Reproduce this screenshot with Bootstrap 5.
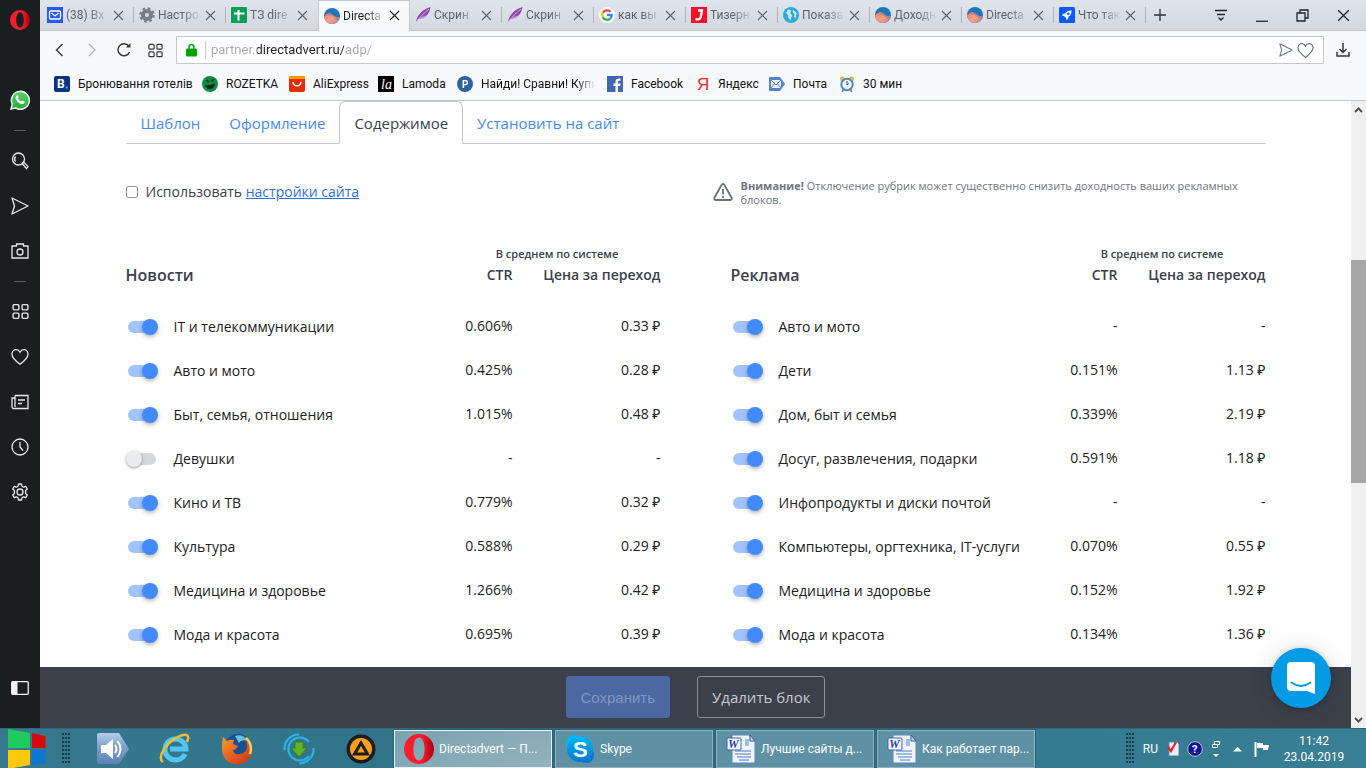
<!DOCTYPE html>
<html lang="ru">
<head>
<meta charset="utf-8">
<meta name="viewport" content="width=device-width, initial-scale=1">
<title>Directadvert — Партнёрам</title>
<link rel="stylesheet" href="https://cdn.jsdelivr.net/npm/bootstrap@5.3.0/dist/css/bootstrap.min.css">
<style>
  :root { --ui: "Open Sans", "Noto Sans", sans-serif; --chrome: Roboto, "Noto Sans", sans-serif; --blue: #448aff; }
  body { font-family: var(--ui); font-size: 14px; color: #212121; }
  button { font-family: inherit; }
  svg { display: block; flex: none; }
  .plain { border: 0; background: none; padding: 0; color: inherit; }

  .side { width: 40px; background: #1b1e1f; color: #e8eaea; }
  .side .plain { height: 45px; width: 40px; }
  .side .logo-btn { height: 40px; margin-bottom: 37px; }
  .side .rule { height: 16px; }
  .side .rule::before { content: ""; width: 12px; height: 1px; background: #5d6061; }
  .side .last-btn { margin-top: auto; margin-bottom: 18px; }
  .line-ico { fill: none; stroke: currentColor; }

  .tabstrip { height: 31px; background: linear-gradient(#dfe5ed, #d2d8de); border-bottom: 1px solid #c3c6ca; padding-left: 2px; font: 12px/16px var(--chrome); color: #5f6368; }
  .btab { width: 92px; height: 31px; padding: 0 9px 0 5px; position: relative; }
  .btab::after { content: ""; width: 1px; height: 16px; background: #aeb3b9; margin-left: 9px; margin-right: -10px; }
  .btab.on { background: #f8f9fb; border: 1px solid #c3c6ca; border-bottom: 0; color: #1f2225; }
  .btab.on::after, .btab.noline::after { background: transparent; }
  .btab .cap { width: 43px; text-align: left; white-space: nowrap; overflow: hidden; margin-left: 3px; margin-right: 4px; mask-image: linear-gradient(90deg, #000 55%, transparent); -webkit-mask-image: linear-gradient(90deg, #000 55%, transparent); }

  .navrow { height: 38px; background: #f8f9fb; padding: 5px 14px 5px 12px; color: #33373b; }
  .navrow .plain { width: 16px; }
  .address { height: 28px; border: 1px solid #c5c8cc; background: #fff; padding: 0 9px; margin: 0 8px 0 12px; }
  .address .bar { width: 1px; height: 18px; background: #c5c8cc; margin: 0 5px 0 8px; }
  .address input { border: 0; outline: 0; padding: 0; font: 13px/20px var(--chrome); color: #999; min-width: 0; -webkit-background-clip: text; background-clip: text; -webkit-text-fill-color: transparent; background-image: linear-gradient(90deg, #a6a8ab 46px, #1d1f22 46px, #1d1f22 133px, #a6a8ab 133px); }
  .marks { height: 32px; background: #f8f9fb; border-bottom: 1px solid #c3c6ca; padding: 0 0 2px 14px; font: 12px/16px var(--chrome); grid-template-columns: 148px 87px 89px 79px 150px 91px 71px 70px 80px; }
  .marks a { color: #111; text-decoration: none; white-space: nowrap; overflow: hidden; }
  .marks .fade-end { mask-image: linear-gradient(90deg, #000 80%, transparent 92%); -webkit-mask-image: linear-gradient(90deg, #000 80%, transparent 92%); }

  .wrap { max-width: 1140px; }
  .nav-tabs { --bs-nav-tabs-border-color: #c4c6cc; }
  .nav-tabs .nav-link { font-size: 15px; line-height: 22px; padding: 10px 14px 9px; color: var(--blue); }
  .nav-tabs .nav-item { margin-right: -1px; }
  .nav-tabs .nav-link.active { color: #3b404b; border-color: #c4c6cc #c4c6cc #fff; }
  .notes { padding-top: 36px; height: 100px; column-gap: 52px; }
  .site-opt { width: 535px; flex: none; padding-top: 3px; line-height: 18px; color: #3b404b; }
  .site-opt a { color: #2f6fe4; }
  .site-opt input { width: 12px; height: 12px; margin: 0; border: 1px solid #8f929c; border-radius: 2px; background: #fff; appearance: none; flex: none; }
  .warn { font-size: 11px; line-height: 14px; color: #6f7480; margin-top: -1px; }

  .pair { column-gap: 70px; }
  .rubrics { width: 100%; table-layout: fixed; border-collapse: collapse; }
  .rubrics .c-ctr { width: 59px; }
  .rubrics .c-price { width: 148px; }
  .rubrics th { font-weight: 600; color: #3b404b; padding: 0; text-align: right; }
  .rubrics .avg { font-size: 11px; line-height: 20px; text-align: center; }
  .rubrics .heads th { font-size: 14px; line-height: 22px; padding-bottom: 18px; }
  .rubrics .heads th:first-child { font-size: 16px; text-align: left; }
  .rubrics td { height: 44px; padding: 0; text-align: right; white-space: nowrap; line-height: 20px; }
  .rubrics td label { display: flex; align-items: center; gap: 16px; padding-top: 1px; }
  .rub { font-size: 14px; }
  .toggle { appearance: none; margin: 0; width: 32px; height: 16px; position: relative; flex: none; }
  .toggle::before { content: ""; position: absolute; inset: 2px; border-radius: 6px; background: #d6d8da; }
  .toggle::after { content: ""; position: absolute; left: 0; top: 0; width: 16px; height: 16px; border-radius: 50%; background: #ebecee; box-shadow: 0 1px 3px rgba(0,0,0,.4); }
  .toggle:checked::before { background: #a1c4ff; }
  .toggle:checked::after { left: 16px; background: var(--blue); box-shadow: 0 2px 4px rgba(0,0,0,.3); }

  .actions { height: 61px; background: #3b404b; gap: 27px; padding-bottom: 2px; }
  .actions .btn { height: 42px; border-radius: 3px; font-size: 15px; line-height: 20px; padding: 0 14px; }
  .actions .save { font-family: "Liberation Sans", Arial, sans-serif; padding-top: 2px; }
  .save:disabled { background: #4a69a3; border-color: #4a69a3; color: #8297c0; opacity: 1; }
  .drop { border: 1px solid #8b8e96; color: #c6c9ce; }
  .chat { position: absolute; right: 20px; bottom: 20px; width: 60px; height: 60px; border-radius: 50%; background: #039be5; border: 0; box-shadow: 0 1px 6px rgba(0,0,0,.2), 0 2px 24px rgba(0,0,0,.14); }

  .scroller { width: 15px; background: #f0f0f0; color: #505356; }
  .scroller .arrow { height: 17px; }
  .scroller .thumb { flex: 223; background: #a7a7a7; }

  .taskbar { height: 40px; background: linear-gradient(100deg, #36798f, #2f7187 40%, #387f96); color: #fff; font: 12px/16px var(--chrome); border-top: 1px solid #2d667a; }
  .dots { width: 9px; height: 31px; background: radial-gradient(circle at 1px 1px, #143c49 1px, transparent 1px) 0 0 / 3px 4px; }
  .quick { gap: 30px; padding-left: 22px; width: 319px; }
  .tasks { gap: 3px; }
  .task { width: 158px; height: 38px; background: #5d91a3; border: 1px solid #90b4c1; outline: 1px solid #2b6075; padding-left: 8px; gap: 4px; white-space: nowrap; }
  .task.on { background: linear-gradient(160deg, #79a3b0, #93b2bd); border-color: #e8f0f3; }
  .clock { width: 72px; }
</style>
</head>
<body class="vh-100 overflow-hidden d-flex flex-column">
<svg width="0" height="0" class="position-absolute" aria-hidden="true">
  <defs>
    <linearGradient id="gDa" x1="0" y1="0" x2="1" y2="1"><stop offset="0" stop-color="#f3766c"/><stop offset=".5" stop-color="#f5a184"/><stop offset="1" stop-color="#c77d8c"/></linearGradient>
    <linearGradient id="gOp" x1="0" y1="0" x2="1" y2="0"><stop offset="0" stop-color="#ff1b2d"/><stop offset=".6" stop-color="#fa1e2e"/><stop offset="1" stop-color="#a70014"/></linearGradient>
    <linearGradient id="gTh" x1="0" y1="0" x2="0" y2="1"><stop offset="0" stop-color="#b5cdea"/><stop offset=".45" stop-color="#7f9fc9"/><stop offset="1" stop-color="#5d83b4"/></linearGradient>
    <linearGradient id="gFx" x1="0" y1="0" x2="1" y2="1"><stop offset="0" stop-color="#f3a32c"/><stop offset=".5" stop-color="#e5601f"/><stop offset="1" stop-color="#c4321c"/></linearGradient>
    <linearGradient id="gSk" x1="0" y1="0" x2="0" y2="1"><stop offset="0" stop-color="#00b7f0"/><stop offset="1" stop-color="#0078d4"/></linearGradient>
    <linearGradient id="gWa" x1="0" y1="0" x2="0" y2="1"><stop offset="0" stop-color="#5fd36b"/><stop offset="1" stop-color="#25a83a"/></linearGradient>
    <symbol id="x" viewBox="0 0 11 11"><path d="M1 1l9 9M10 1l-9 9" fill="none" stroke="currentColor" stroke-width="1.1"/></symbol>
    <symbol id="da" viewBox="0 0 16 16"><circle cx="8" cy="8" r="8" fill="#1f77b8"/><path d="M0 8.500C2 6.500 4 5 5.500 5c2 0 3.500 2.500 5.500 3.500 1.500.8 3 .9 4.900.6A8 8 0 0 1 0 8.500z" fill="url(#gDa)"/><path d="M5.500 5c2 0 3.500 2.500 5.500 3.500 1.500.8 3 .9 4.900.6a8 8 0 0 1-1.400 3.700C11 12 10 9 8 8S5 7.500 3 7z" fill="#8e7399" opacity=".5"/></symbol>
    <symbol id="quill" viewBox="0 0 16 16"><path d="M1 15C2 8 8 2 15.500 0c-1 6-4 11-12 12z" fill="#8e44ad"/><path d="M1 15C5 10 9 6 14 2" fill="none" stroke="#d9bce6" stroke-width=".9"/><path d="M3.500 12c4 0 7-1 9-4l-6 2z" fill="#c79be0"/></symbol>
    <symbol id="heart" viewBox="0 0 18 18"><path d="M9 16.300C4 12.500 1 9.500 1 6.200 1 3.600 2.900 1.700 5.200 1.700c1.700 0 3 .9 3.800 2.500.8-1.600 2.100-2.500 3.800-2.500C15.100 1.700 17 3.600 17 6.200c0 3.300-3 6.300-8 10.100z" fill="none" stroke="currentColor" stroke-width="1.300"/></symbol>
    <symbol id="send" viewBox="0 0 18 18"><path d="M1 1l16 8-16 8 2.500-8z" fill="none" stroke="currentColor" stroke-width="1.300" stroke-linejoin="round"/></symbol>
    <symbol id="grid4" viewBox="0 0 16 16"><g fill="none" stroke="currentColor" stroke-width="1.300"><rect x="1" y="1.500" width="5.500" height="5" rx="1"/><rect x="9.500" y="1.500" width="5.500" height="5" rx="1"/><rect x="1" y="9.500" width="5.500" height="5" rx="1"/><rect x="9.500" y="9.500" width="5.500" height="5" rx="1"/></g></symbol>
    <symbol id="opera" viewBox="0 0 30 30"><path fill-rule="evenodd" fill="url(#gOp)" d="M15 0a15 15 0 1 0 0 30 15 15 0 0 0 0-30zm0 3.500c3.600 0 5.600 5 5.600 11.500S18.600 26.500 15 26.500 9.400 21.500 9.400 15 11.400 3.500 15 3.500z"/></symbol>
    <symbol id="word" viewBox="0 0 30 30"><path d="M6 1h18l5 6v22H6z" fill="#eef4fc" stroke="#5f83bd"/><path d="M24 1v6h5z" fill="#c3d6ee" stroke="#3a588c"/><rect x="19" y="5" width="4" height="7" fill="#9fc0e6"/><path d="M9 17h16M9 20h16M11 23h14M13 26h10" stroke="#86a5d2" stroke-width="1.300"/><rect x="1" y="4" width="14" height="12" rx="1" fill="#f5f8fe" stroke="#3e62ae"/><text x="2" y="14" font-family="Liberation Serif, serif" font-weight="700" font-style="italic" font-size="12" fill="#2646a0">W</text></symbol>
  </defs>
</svg>

<div class="d-flex flex-grow-1 overflow-hidden">
  <nav class="side d-flex flex-column align-items-center flex-shrink-0" aria-label="Opera">
    <button class="plain logo-btn d-flex align-items-center justify-content-center" aria-label="Меню Opera"><svg width="20" height="20"><use href="#opera"/></svg></button>
    <button class="plain d-flex align-items-center justify-content-center" aria-label="WhatsApp"><svg width="20" height="20" viewBox="0 0 20 20"><path d="M1 19l1.300-4.700A9 9 0 1 1 5.700 18z" fill="url(#gWa)" stroke="#e9f3ea" stroke-width="1.500"/><path d="M7 5.200c.5-.2 1 0 1.200.6l.5 1.300c.1.400-.8 1.200-.7 1.500.8 1.500 1.900 2.400 3.300 3 .4.100 1-1.100 1.400-1l1.800.9c.4.300.1 1.500-.5 2-1.500 1-3.300.5-5-.6C7.300 11.800 5.700 9.600 5.600 8c0-1.200.6-2.400 1.400-2.800z" fill="#fff"/></svg></button>
    <div class="rule d-flex align-items-center"></div>
    <button class="plain d-flex align-items-center justify-content-center" aria-label="Поиск"><svg class="line-ico" width="18" height="18" viewBox="0 0 18 18" stroke-width="1.300"><circle cx="7.500" cy="7" r="6"/><path d="M4.500 9.500a4 4 0 0 1 0-5M11 11.500l1.500-1.500 4.500 4.500-1.500 2.200z"/></svg></button>
    <button class="plain d-flex align-items-center justify-content-center" aria-label="Моя лента"><svg width="18" height="18"><use href="#send"/></svg></button>
    <button class="plain d-flex align-items-center justify-content-center" aria-label="Снимок"><svg class="line-ico" width="18" height="18" viewBox="0 0 18 18" stroke-width="1.300"><path d="M1 4h4.500V2h7v2H17v12H1z" stroke-linejoin="round"/><circle cx="9" cy="10" r="3"/></svg></button>
    <div class="rule d-flex align-items-center"></div>
    <button class="plain d-flex align-items-center justify-content-center" aria-label="Экспресс-панель"><svg width="17" height="17"><use href="#grid4"/></svg></button>
    <button class="plain d-flex align-items-center justify-content-center" aria-label="Закладки"><svg width="18" height="18"><use href="#heart"/></svg></button>
    <button class="plain d-flex align-items-center justify-content-center" aria-label="Новости"><svg class="line-ico" width="18" height="18" viewBox="0 0 18 18" stroke-width="1.300"><path d="M4 2.500h13v13H2.500A1.500 1.500 0 0 1 1 14V5h3M4 2.500V14M7 7h7M7 10.500h4"/></svg></button>
    <button class="plain d-flex align-items-center justify-content-center" aria-label="История"><svg class="line-ico" width="18" height="18" viewBox="0 0 18 18" stroke-width="1.300"><circle cx="9" cy="9" r="8"/><path d="M9 4v5l3 3.500"/></svg></button>
    <button class="plain d-flex align-items-center justify-content-center" aria-label="Настройки"><svg class="line-ico" width="18" height="18" viewBox="0 0 18 18" stroke-width="1.300" stroke-linejoin="round"><path d="M7.500 1h3l.5 2.300 1.600.9 2.200-.8 1.500 2.600-1.700 1.500v3l1.700 1.500-1.500 2.600-2.200-.8-1.600.9-.5 2.300h-3L7 14.700l-1.600-.9-2.200.8L1.700 12l1.700-1.500v-3L1.700 6l1.500-2.600 2.200.8L7 3.300z"/><circle cx="9" cy="9" r="3"/></svg></button>
    <button class="plain last-btn d-flex align-items-center justify-content-center" aria-label="Боковая панель"><svg width="18" height="14" viewBox="0 0 18 14"><rect x=".7" y=".7" width="16.600" height="12.600" rx="1" fill="none" stroke="#f2f2f2" stroke-width="1.300"/><path d="M1 1h5.500v12H1z" fill="#f2f2f2"/></svg></button>
  </nav>

  <div class="d-flex flex-column flex-grow-1 overflow-hidden">
    <header class="flex-shrink-0">
      <div class="tabstrip d-flex align-items-center">
        <button class="btab plain d-flex align-items-center"><svg width="16" height="16"><rect width="16" height="16" fill="#2a57f0"/><rect x="2.500" y="4" width="11" height="8" rx="1" fill="none" stroke="#fff" stroke-width="1.300"/><path d="M4.500 6L8 9l3.500-3" fill="none" stroke="#fff" stroke-width="1.300"/></svg><span class="cap">(38) Вх</span><svg width="11" height="11"><use href="#x"/></svg></button>
        <button class="btab plain d-flex align-items-center"><svg width="16" height="16" viewBox="0 0 16 16"><circle cx="8" cy="8" r="4" fill="none" stroke="#7b7f83" stroke-width="4"/><circle cx="8" cy="8" r="6.500" fill="none" stroke="#7b7f83" stroke-width="2.500" stroke-dasharray="2.600 2.500"/></svg><span class="cap">Настро</span><svg width="11" height="11"><use href="#x"/></svg></button>
        <button class="btab plain noline d-flex align-items-center"><svg width="16" height="16"><rect width="16" height="16" rx="1" fill="#109d58"/><path d="M3 6.500h10.500M7.500 3v10.500" stroke="#fff" stroke-width="2"/></svg><span class="cap">ТЗ dire</span><svg width="11" height="11"><use href="#x"/></svg></button>
        <button class="btab plain on d-flex align-items-center"><svg width="16" height="16"><use href="#da"/></svg><span class="cap">Directa</span><svg width="11" height="11"><use href="#x"/></svg></button>
        <button class="btab plain d-flex align-items-center"><svg width="16" height="16"><use href="#quill"/></svg><span class="cap">Скрин</span><svg width="11" height="11"><use href="#x"/></svg></button>
        <button class="btab plain d-flex align-items-center"><svg width="16" height="16"><use href="#quill"/></svg><span class="cap">Скрин</span><svg width="11" height="11"><use href="#x"/></svg></button>
        <button class="btab plain d-flex align-items-center"><svg width="16" height="16" viewBox="0 0 16 16"><circle cx="8" cy="8" r="8" fill="#fff"/><g fill="none" stroke-width="2.300"><path d="M11.500 4.800A4.800 4.800 0 0 0 3.800 5.800" stroke="#ea4335"/><path d="M3.800 5.800a4.800 4.800 0 0 0 0 4.500" stroke="#fbbc05"/><path d="M3.800 10.300a4.800 4.800 0 0 0 7.400 1.300" stroke="#34a853"/><path d="M11.200 11.600c1-.9 1.600-2.200 1.500-3.600H8" stroke="#4285f4"/></g></svg><span class="cap">как вы</span><svg width="11" height="11"><use href="#x"/></svg></button>
        <button class="btab plain d-flex align-items-center"><svg width="16" height="16"><rect width="16" height="16" fill="#fb0d29"/><path d="M7 3.500h4L9.800 10c-.4 2-2.300 2.800-5.300 2.200" fill="none" stroke="#fff" stroke-width="2.300"/></svg><span class="cap">Тизерн</span><svg width="11" height="11"><use href="#x"/></svg></button>
        <button class="btab plain d-flex align-items-center"><svg width="16" height="16"><circle cx="8" cy="8" r="8" fill="#31a8d8"/><path d="M5 2.500l3 .8-.6 3L9 8l-1.500 5.500L5.500 11 5 8 3 6zM10.500 3l3 3-.5 5-2-1 .5-3-2-2z" fill="#c8edf7"/></svg><span class="cap">Показа</span><svg width="11" height="11"><use href="#x"/></svg></button>
        <button class="btab plain d-flex align-items-center"><svg width="16" height="16"><use href="#da"/></svg><span class="cap">Доходн</span><svg width="11" height="11"><use href="#x"/></svg></button>
        <button class="btab plain d-flex align-items-center"><svg width="16" height="16"><use href="#da"/></svg><span class="cap">Directa</span><svg width="11" height="11"><use href="#x"/></svg></button>
        <button class="btab plain d-flex align-items-center"><svg width="16" height="16"><rect width="16" height="16" rx="1.500" fill="#0a5bff"/><path d="M12.500 3.500c-3-.2-5 .9-6.300 3l-2 .3L3 8.800l2 .2 2 2 .2 2 2-1.200.3-2c2.100-1.300 3.200-3.300 3-6.300z" fill="#fff"/><circle cx="9.300" cy="6.700" r="1.300" fill="#0a5bff"/></svg><span class="cap">Что так</span><svg width="11" height="11"><use href="#x"/></svg></button>
        <button class="plain ms-2" aria-label="Новая вкладка"><svg width="12" height="12"><path d="M6 0v12M0 6h12" stroke="#33373b" stroke-width="1.300"/></svg></button>
        <div class="ms-auto d-flex align-items-center text-dark pe-3">
          <button class="plain me-4" aria-label="Меню вкладок"><svg class="line-ico" width="14" height="16" stroke-width="1.300"><path d="M1 3.500h12M3 7.500h8M4.500 10.500L7 13l2.500-2.500"/></svg></button>
          <button class="plain ms-1 me-4" aria-label="Свернуть"><svg width="12" height="13"><path d="M0 12.300h12" stroke="#33373b" stroke-width="1.400"/></svg></button>
          <button class="plain ms-1 me-4" aria-label="Окно"><svg class="line-ico" width="13" height="13" stroke-width="1.300"><path d="M1 4h8v8H1zM4 4V1h8v8H9"/></svg></button>
          <button class="plain ms-1" aria-label="Закрыть"><svg width="13" height="13"><use href="#x"/></svg></button>
        </div>
      </div>
      <div class="navrow d-flex align-items-center">
        <button class="plain me-3" aria-label="Назад"><svg class="line-ico" width="16" height="16" stroke-width="1.400"><path d="M10.500 2L4.500 8l6 6"/></svg></button>
        <button class="plain me-3 text-black-50" aria-label="Вперёд"><svg class="line-ico" width="16" height="16" stroke-width="1.200" opacity=".6"><path d="M5 2l6 6-6 6"/></svg></button>
        <button class="plain me-3" aria-label="Обновить"><svg class="line-ico" width="16" height="16" stroke-width="1.500"><path d="M13.500 10A6 6 0 1 1 13 4.500"/><path d="M14.500 1v4.500H10z" fill="currentColor" stroke="none"/></svg></button>
        <button class="plain" aria-label="Экспресс-панель"><svg width="15" height="15"><use href="#grid4"/></svg></button>
        <div class="address d-flex align-items-center flex-grow-1">
          <svg width="11" height="14"><path d="M3 6V4a2.500 2.500 0 0 1 5 0v2" fill="none" stroke="#0aa30a" stroke-width="1.500"/><rect y="5.500" width="11" height="8" rx="1" fill="#0aa30a"/></svg>
          <span class="bar"></span>
          <input class="flex-grow-1" type="text" aria-label="Адрес" value="partner.directadvert.ru/adp/">
          <svg class="me-1 text-secondary" width="14" height="14"><use href="#send"/></svg>
          <svg class="text-secondary" width="17" height="17"><use href="#heart"/></svg>
        </div>
        <button class="plain ms-1" aria-label="Загрузки"><svg class="line-ico" width="14" height="16" stroke-width="1.500"><path d="M1 10v4h12v-4M7 1v9M3.500 7L7 10.500 10.500 7"/></svg></button>
      </div>
      <nav class="marks d-grid align-items-center" aria-label="Закладки">
        <a href="#" class="d-flex align-items-center gap-2"><svg width="16" height="16"><rect width="16" height="16" rx="2" fill="#053580"/><text x="3" y="12" font-size="12" font-weight="700" fill="#fff">B</text><circle cx="12.800" cy="11.500" r="1.200" fill="#22a6e8"/></svg>Бронювання готелів</a>
        <a href="#" class="d-flex align-items-center gap-2"><svg width="16" height="16"><circle cx="8" cy="8" r="8" fill="#118a43"/><path d="M3 9c3 .8 7 0 10-2-.3 4-2 6-4.800 6S3.800 11.500 3 9z" fill="#10271a"/><path d="M4 4l3 2M12 3L9.500 5.500" stroke="#0e3a20" stroke-width="1.500"/></svg>ROZETKA</a>
        <a href="#" class="d-flex align-items-center gap-2"><svg width="16" height="16"><rect width="16" height="16" rx="2" fill="#e62e04"/><path d="M0 3V2q0-2 2-2h12q2 0 2 2v1z" fill="#ff9a00"/><path d="M4 6c.5 5 7.500 5 8 0" fill="none" stroke="#fff" stroke-width="1.500"/></svg>AliExpress</a>
        <a href="#" class="d-flex align-items-center gap-2"><svg width="16" height="16"><rect width="16" height="16" fill="#000"/><text x="3" y="13" font-family="Liberation Serif, serif" font-style="italic" font-size="14" fill="#fff">la</text></svg>Lamoda</a>
        <a href="#" class="d-flex align-items-center gap-2 fade-end"><svg width="16" height="16"><circle cx="8" cy="8" r="8" fill="#2c629e"/><text x="5" y="12" font-size="10" font-weight="700" fill="#fff">P</text></svg>Найди! Сравни! Купи</a>
        <a href="#" class="d-flex align-items-center gap-2"><svg width="16" height="16"><rect width="16" height="16" fill="#4267b2"/><path d="M11 16v-6h2.200l.3-2.500H11V6c0-.8.300-1.200 1.300-1.200h1.300V2.500C11 2.200 8.500 2.500 8.500 5.500v2h-2V10h2v6z" fill="#fff"/></svg>Facebook</a>
        <a href="#" class="d-flex align-items-center gap-2"><svg width="12" height="16"><text x="-1" y="14" font-family="Liberation Sans, sans-serif" font-size="17" fill="#f4281c" font-weight="400">Я</text></svg>Яндекс</a>
        <a href="#" class="d-flex align-items-center gap-2"><svg width="16" height="16"><path d="M1 1h10l5 7-5 7H1q-1 0-1-1V2q0-1 1-1z" fill="#5684c8"/><rect x="2" y="4" width="10" height="8" fill="#e8effa"/><path d="M2 4l5 5 5-5M2 12l3.500-4M12 12L8.500 8" fill="none" stroke="#5684c8"/></svg>Почта</a>
        <a href="#" class="d-flex align-items-center gap-2"><svg width="16" height="16"><circle cx="3.500" cy="3" r="2.500" fill="#eab54a"/><circle cx="12.500" cy="3" r="2.500" fill="#eab54a"/><path d="M3 16l2-3M13 16l-2-3" stroke="#777" stroke-width="1.500"/><circle cx="8" cy="8.500" r="5.700" fill="#f6fafc" stroke="#4b8bc0" stroke-width="2"/><path d="M8 5v4l2-1.500" fill="none" stroke="#345"/></svg>30 мин</a>
      </nav>
    </header>

    <div class="d-flex flex-grow-1 overflow-hidden">
      <div class="d-flex flex-column flex-grow-1 position-relative overflow-hidden">
        <main class="flex-grow-1 overflow-hidden">
          <div class="wrap mx-auto">
            <ul class="nav nav-tabs">
              <li class="nav-item"><a class="nav-link" href="#">Шаблон</a></li>
              <li class="nav-item"><a class="nav-link" href="#">Оформление</a></li>
              <li class="nav-item"><a class="nav-link active" aria-current="page" href="#">Содержимое</a></li>
              <li class="nav-item"><a class="nav-link" href="#">Установить на сайт</a></li>
            </ul>
            <div class="notes d-flex align-items-start">
              <div class="site-opt d-flex align-items-center gap-2"><input type="checkbox" id="useSite"><label for="useSite">Использовать <a href="#">настройки сайта</a></label></div>
              <div class="warn d-flex gap-2 flex-grow-1"><svg class="mt-1" width="20" height="18" viewBox="0 0 20 18"><path d="M8.700 1.700q1.300-1.600 2.600 0l7.300 13q.7 2-1.300 2.300H2.700Q.7 16.700 1.400 14.700z" fill="none" stroke="#6b7080" stroke-width="1.800"/><path d="M10 6v5.500M10 13v2" stroke="#6b7080" stroke-width="1.800"/></svg><p class="m-0"><b>Внимание!</b> Отключение рубрик может существенно снизить доходность ваших рекламных блоков.</p></div>
            </div>
            <div class="pair d-flex">
              <table class="rubrics">
                <colgroup><col><col class="c-ctr"><col class="c-price"></colgroup>
                <thead>
                  <tr><td class="h-auto"></td><th class="avg" colspan="2">В среднем по системе</th></tr>
                  <tr class="heads"><th>Новости</th><th>CTR</th><th>Цена за переход</th></tr>
                </thead>
                <tbody>
                  <tr><td><label><input class="toggle" type="checkbox" checked>IT и телекоммуникации</label></td><td>0.606%</td><td>0.33 <span class="rub">₽</span></td></tr>
                  <tr><td><label><input class="toggle" type="checkbox" checked>Авто и мото</label></td><td>0.425%</td><td>0.28 <span class="rub">₽</span></td></tr>
                  <tr><td><label><input class="toggle" type="checkbox" checked>Быт, семья, отношения</label></td><td>1.015%</td><td>0.48 <span class="rub">₽</span></td></tr>
                  <tr><td><label><input class="toggle" type="checkbox">Девушки</label></td><td>-</td><td>-</td></tr>
                  <tr><td><label><input class="toggle" type="checkbox" checked>Кино и ТВ</label></td><td>0.779%</td><td>0.32 <span class="rub">₽</span></td></tr>
                  <tr><td><label><input class="toggle" type="checkbox" checked>Культура</label></td><td>0.588%</td><td>0.29 <span class="rub">₽</span></td></tr>
                  <tr><td><label><input class="toggle" type="checkbox" checked>Медицина и здоровье</label></td><td>1.266%</td><td>0.42 <span class="rub">₽</span></td></tr>
                  <tr><td><label><input class="toggle" type="checkbox" checked>Мода и красота</label></td><td>0.695%</td><td>0.39 <span class="rub">₽</span></td></tr>
                </tbody>
              </table>
              <table class="rubrics">
                <colgroup><col><col class="c-ctr"><col class="c-price"></colgroup>
                <thead>
                  <tr><td class="h-auto"></td><th class="avg" colspan="2">В среднем по системе</th></tr>
                  <tr class="heads"><th>Реклама</th><th>CTR</th><th>Цена за переход</th></tr>
                </thead>
                <tbody>
                  <tr><td><label><input class="toggle" type="checkbox" checked>Авто и мото</label></td><td>-</td><td>-</td></tr>
                  <tr><td><label><input class="toggle" type="checkbox" checked>Дети</label></td><td>0.151%</td><td>1.13 <span class="rub">₽</span></td></tr>
                  <tr><td><label><input class="toggle" type="checkbox" checked>Дом, быт и семья</label></td><td>0.339%</td><td>2.19 <span class="rub">₽</span></td></tr>
                  <tr><td><label><input class="toggle" type="checkbox" checked>Досуг, развлечения, подарки</label></td><td>0.591%</td><td>1.18 <span class="rub">₽</span></td></tr>
                  <tr><td><label><input class="toggle" type="checkbox" checked>Инфопродукты и диски почтой</label></td><td>-</td><td>-</td></tr>
                  <tr><td><label><input class="toggle" type="checkbox" checked>Компьютеры, оргтехника, IT-услуги</label></td><td>0.070%</td><td>0.55 <span class="rub">₽</span></td></tr>
                  <tr><td><label><input class="toggle" type="checkbox" checked>Медицина и здоровье</label></td><td>0.152%</td><td>1.92 <span class="rub">₽</span></td></tr>
                  <tr><td><label><input class="toggle" type="checkbox" checked>Мода и красота</label></td><td>0.134%</td><td>1.36 <span class="rub">₽</span></td></tr>
                </tbody>
              </table>
            </div>
          </div>
        </main>
        <div class="actions d-flex align-items-center justify-content-center flex-shrink-0">
          <button class="btn save" disabled>Сохранить</button>
          <button class="btn drop">Удалить блок</button>
        </div>
        <button class="chat d-flex align-items-center justify-content-center" aria-label="Чат"><svg width="28" height="32" viewBox="0 0 28 32"><path d="M4 0h20q4 0 4 4v28l-8-3H4q-4 0-4-4V4q0-4 4-4z" fill="#fff"/><path d="M4.500 20.500q9.500 7 19 0" fill="none" stroke="#039be5" stroke-width="1.800" stroke-linecap="round"/></svg></button>
      </div>
      <div class="scroller d-flex flex-column flex-shrink-0" aria-hidden="true">
        <div class="arrow d-flex align-items-center justify-content-center"><svg class="line-ico" width="9" height="6" stroke-width="2"><path d="M1 5l3.500-3.500L8 5"/></svg></div>
        <div style="flex:142"></div><div class="thumb"></div><div style="flex:228"></div>
        <div class="arrow d-flex align-items-center justify-content-center"><svg class="line-ico" width="9" height="6" stroke-width="2"><path d="M1 1l3.500 3.500L8 1"/></svg></div>
      </div>
    </div>
  </div>
</div>

<footer class="taskbar d-flex align-items-center flex-shrink-0">
  <button class="plain ms-2" aria-label="Пуск"><svg width="38" height="40" viewBox="0 0 38 40"><path d="M0 0l22 4v15H0z" fill="#1fca5e"/><path d="M24 4l13.500 3v12H24z" fill="#d40a0e"/><path d="M0 21h22v15L0 40z" fill="#ffc80a"/><path d="M24 21h13.500v13L24 36z" fill="#0a78d0"/></svg></button>
  <span class="dots ms-3 me-1"></span>
  <div class="quick d-flex align-items-center">
    <button class="plain" aria-label="Звук"><svg width="32" height="32"><path d="M2 0h20l10 16-10 15H2q-2 0-2-2V2q0-2 2-2z" fill="url(#gTh)"/><path d="M4 12h5l7-6v20l-7-6H4z" fill="#fff"/><path d="M18 12q3 4 0 8M20.500 8q6 8 0 16" fill="none" stroke="#fff" stroke-width="2"/></svg></button>
    <button class="plain" aria-label="Internet Explorer"><svg width="32" height="32"><path d="M26 21a10.500 10.500 0 1 1 1-5H11" fill="none" stroke="#55c6f4" stroke-width="5"/><path d="M4 29C-2 25 6 11 17 5S31 2 28 9" fill="none" stroke="#f2bf2a" stroke-width="2.500"/></svg></button>
    <button class="plain" aria-label="Firefox"><svg width="32" height="32"><circle cx="17" cy="15" r="14" fill="#1c4f92"/><path d="M14 3q8-3 12 5-6-2-8 2z" fill="#5fc3e8"/><path d="M2 4l4 4q3-2 7-1l-1 4 5 2q-1 3-5 4 1 5 6 4 6 0 8-6 1-7-4-12 9 4 9 14a15 15 0 0 1-30-1Q1 9 2 4z" fill="url(#gFx)"/><path d="M25 5q7 6 4 16" fill="none" stroke="#fbd34d" stroke-width="2.500"/></svg></button>
    <button class="plain" aria-label="Загрузчик"><svg width="32" height="32"><g fill="none" stroke="#2bb3e6" stroke-width="2.200"><path d="M1.500 17A14.500 14.500 0 0 1 16 1.500M30.500 15A14.500 14.500 0 0 1 16 30.500"/><path d="M26 9a11.500 11.500 0 1 0 0 14"/></g><path d="M12 9h8v6h4l-8 9-8-9h4z" fill="#5fb52a" stroke="#3c8214"/></svg></button>
    <button class="plain" aria-label="AIMP"><svg width="32" height="32"><circle cx="16" cy="16" r="14.500" fill="#1d1d1d"/><circle cx="16" cy="16" r="11" fill="#f8a01d"/><path d="M16 10l6.500 11H9.500z" fill="none" stroke="#1d1d1d" stroke-width="3"/></svg></button>
  </div>
  <div class="tasks d-flex">
    <button class="plain task on d-flex align-items-center"><svg width="32" height="30" viewBox="0 0 30 30"><use href="#opera" width="30" height="30"/></svg>Directadvert — П...</button>
    <button class="plain task d-flex align-items-center"><svg width="32" height="30" viewBox="0 0 32 30"><rect x="2" y="1" width="16" height="16" rx="8" fill="#00b7f0"/><rect x="14" y="13" width="16" height="16" rx="8" fill="#0078d4"/><circle cx="16" cy="15" r="13" fill="url(#gSk)"/><text x="9" y="23" font-family="Liberation Sans, sans-serif" font-size="22" font-weight="700" fill="#fff">S</text></svg>Skype</button>
    <button class="plain task d-flex align-items-center"><svg width="32" height="30"><use href="#word"/></svg>Лучшие сайты д...</button>
    <button class="plain task d-flex align-items-center"><svg width="32" height="30"><use href="#word"/></svg>Как работает пар...</button>
  </div>
  <div class="ms-auto d-flex align-items-center">
    <span class="dots me-2"></span>
    <span class="me-2">RU</span>
    <svg class="me-2" width="13" height="15"><path d="M3 1h8l2 2v12H3z" fill="#e9eefa" stroke="#6b83b8"/><path d="M2 6l3 4 5-9" fill="none" stroke="#e2261c" stroke-width="2.200"/></svg>
    <svg class="me-2" width="16" height="16"><circle cx="8" cy="8" r="7.300" fill="#13139a" stroke="#bbb"/><text x="5" y="12" font-size="11" font-weight="700" fill="#fff">?</text></svg>
    <svg class="me-2" width="10" height="20"><path d="M1.500 5.500h5v3h-5zM3.500 5V2.500h5v3h-2" fill="none" stroke="#fff"/><path d="M2 15h6l-3 3z" fill="#fff"/></svg>
    <svg class="me-2 ms-1" width="9" height="6"><path d="M0 5.500h9L4.500 1z" fill="#fff"/></svg>
    <svg class="ms-1" width="16" height="16"><path d="M1.500 1v15" stroke="#fff" stroke-width="2"/><path d="M3 2h6v2h6l-1 5H9V7H3z" fill="#fff"/></svg>
    <div class="clock text-center ms-2 me-3"><div>11:42</div><div>23.04.2019</div></div>
  </div>
</footer>
<script src="https://cdn.jsdelivr.net/npm/bootstrap@5.3.0/dist/js/bootstrap.bundle.min.js"></script>
</body>
</html>
